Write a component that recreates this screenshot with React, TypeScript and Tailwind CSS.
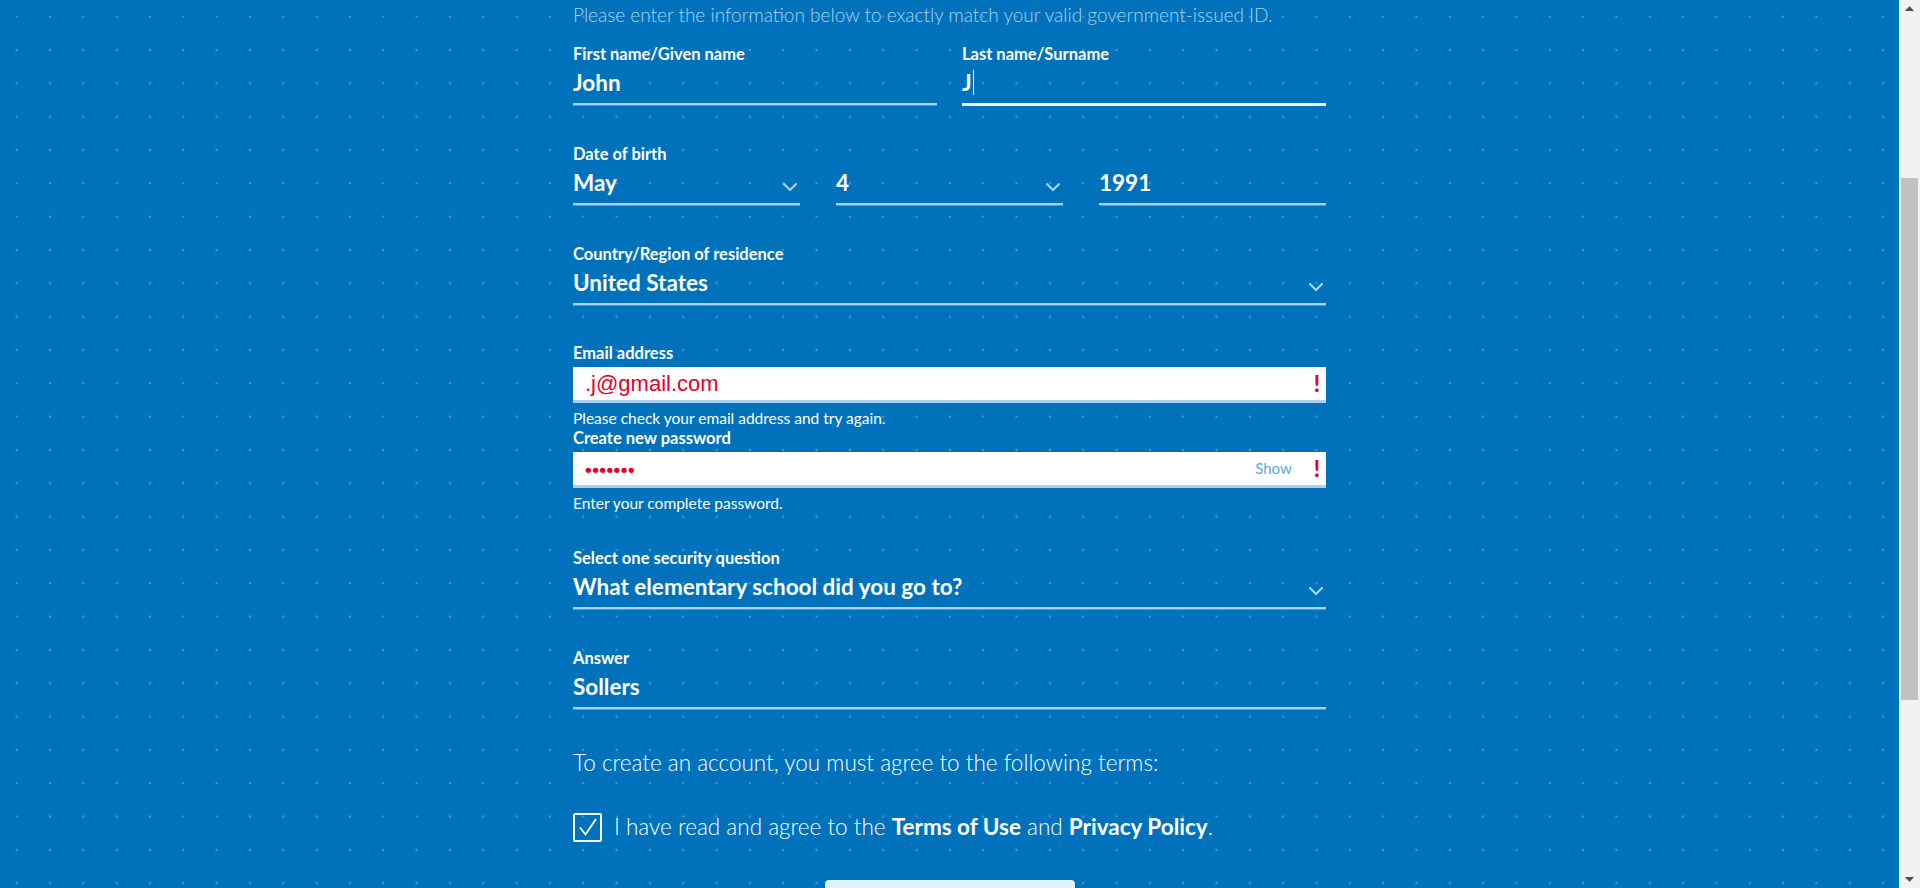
import React from "react";

const FONT = { fontFamily: "Lato, 'Open Sans', sans-serif" };

const Chevron = () => (
  <svg width="16" height="10" viewBox="0 0 16 10" className="shrink-0">
    <path d="M1.5 1.5 L8 8 L14.5 1.5" fill="none" stroke="#a9d2f0" strokeWidth="2.2" />
  </svg>
);

const Bang = () => (
  <span className="text-[#e4002b] text-[22px] font-black leading-none">!</span>
);

type LineFieldProps = {
  label?: string;
  value: string;
  select?: boolean;
  active?: boolean;
  className?: string;
};

const LineField = ({ label, value, select, active, className = "" }: LineFieldProps) => (
  <div className={`flex flex-col ${className}`}>
    {label && <div className="text-[16.5px] leading-5 font-bold text-white">{label}</div>}
    <div className="flex items-center justify-between h-[39px]">
      <div className="flex items-center text-[22.5px] leading-7 font-bold text-white -mt-[2px]">
        {value}
        {active && <span className="ml-[1px] inline-block w-[1px] h-[25px] bg-white" />}
      </div>
      {select && (
        <div className="pr-[2px] pt-[6px]">
          <Chevron />
        </div>
      )}
    </div>
    {active ? (
      <div className="h-[3px] bg-white" />
    ) : (
      <div className="h-[3px] bg-[#a9d2f0] border-b border-[#4d9bd6]" />
    )}
  </div>
);

type BoxFieldProps = {
  label: string;
  value: React.ReactNode;
  error: string;
  show?: boolean;
};

const BoxField = ({ label, value, error, show }: BoxFieldProps) => (
  <div className="flex flex-col">
    <div className="text-[16.5px] leading-5 font-bold text-white">{label}</div>
    <div className="mt-1 h-9 bg-white border-b-[3px] border-[#a9d2f0] flex items-center pl-3 pr-[6px]">
      <div
        className="flex-1 text-[22px] text-[#e4002b]"
        style={{ fontFamily: "'Liberation Sans', Arial, sans-serif" }}
      >
        {value}
      </div>
      {show && <span className="text-[15px] text-[#5aa8e8] mr-[22px]">Show</span>}
      <Bang />
    </div>
    <div className="mt-1.5 text-[15.5px] leading-[18px] text-white">{error}</div>
  </div>
);

const Scrollbar = () => (
  <div className="w-[21px] h-full bg-[#f1f1f1] flex flex-col shrink-0">
    <div className="h-[17px] flex items-center justify-center">
      <svg width="9" height="5" viewBox="0 0 9 5">
        <path d="M0 5 L4.5 0 L9 5 Z" fill="#505050" />
      </svg>
    </div>
    <div className="h-[161px]" />
    <div className="h-[522px] mx-[2px] bg-[#c1c1c1]" />
    <div className="flex-1" />
    <div className="h-[17px] flex items-center justify-center">
      <svg width="9" height="5" viewBox="0 0 9 5">
        <path d="M0 0 L4.5 5 L9 0 Z" fill="#505050" />
      </svg>
    </div>
  </div>
);

export default function App() {
  return (
    <div className="flex w-full h-[888px] overflow-hidden" style={FONT}>
      <main className="flex-1 h-full overflow-hidden bg-[#0072bc] bg-[radial-gradient(circle,rgba(140,195,235,0.45)_1px,transparent_1.6px)] bg-[length:33.333px_33.333px]">
        <div className="w-[753px] mx-auto flex flex-col">
          <p className="mt-[3px] text-[19px] leading-6 font-light text-[#a9d2f0]">
            Please enter the information below to exactly match your valid government-issued ID.
          </p>

          <div className="mt-[17px] grid grid-cols-2 gap-x-[25px]">
            <LineField label="First name/Given name" value="John" />
            <LineField label="Last name/Surname" value="J" active />
          </div>

          <div className="mt-[38px] flex flex-col">
            <div className="text-[16.5px] leading-5 font-bold text-white">Date of birth</div>
            <div className="grid grid-cols-3 gap-x-[36px]">
              <LineField value="May" select />
              <LineField value="4" select />
              <LineField value="1991" />
            </div>
          </div>

          <LineField className="mt-[38px]" label="Country/Region of residence" value="United States" select />

          <div className="mt-[37px]">
            <BoxField
              label="Email address"
              value=".j@gmail.com"
              error="Please check your email address and try again."
            />
          </div>

          <div className="mt-[1px]">
            <BoxField
              label="Create new password"
              value={<span className="text-[19px] tracking-[0.5px] font-bold">•••••••</span>}
              error="Enter your complete password."
              show
            />
          </div>

          <LineField
            className="mt-[36px]"
            label="Select one security question"
            value="What elementary school did you go to?"
            select
          />

          <LineField className="mt-[38px]" label="Answer" value="Sollers" />

          <p className="mt-[38px] text-[22.5px] leading-[30px] font-light text-white">
            To create an account, you must agree to the following terms:
          </p>

          <div className="mt-[34px] flex items-center gap-[12px]">
            <div className="w-[29px] h-[29px] border-2 border-white rounded-[2px] flex items-center justify-center">
              <svg width="22" height="22" viewBox="0 0 22 22">
                <path d="M3 11.5 L8.5 18.5 L19 3" fill="none" stroke="white" strokeWidth="1.8" />
              </svg>
            </div>
            <p className="text-[22.5px] leading-[30px] font-light text-white">
              I have read and agree to the <span className="font-bold">Terms of Use</span> and{" "}
              <span className="font-bold">Privacy Policy</span>.
            </p>
          </div>

          <div className="mt-[38px] self-center w-[250px] h-[44px] rounded bg-[#e3f1fa]" />
        </div>
      </main>
      <Scrollbar />
    </div>
  );
}
